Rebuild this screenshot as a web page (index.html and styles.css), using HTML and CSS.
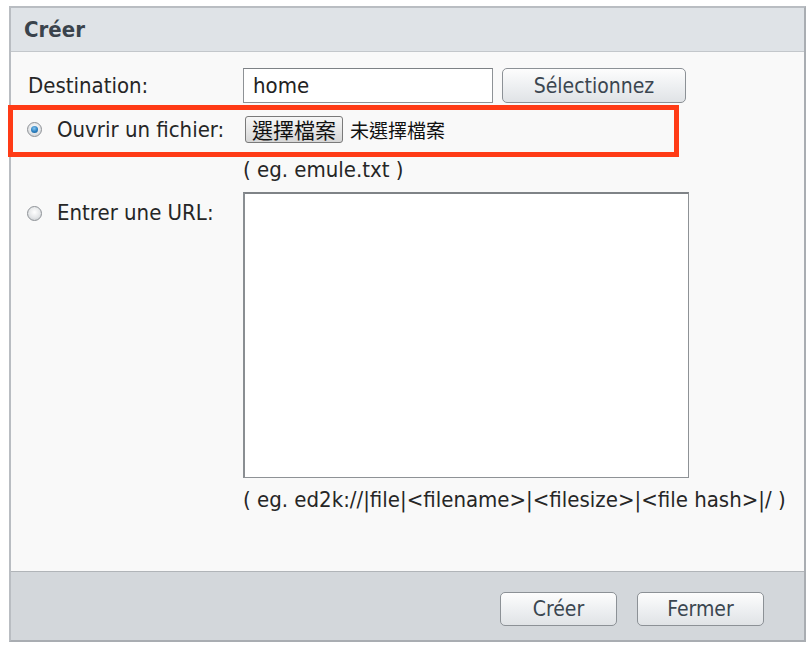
FILE: index.html
```html
<!DOCTYPE html>
<html lang="fr">
<head>
<meta charset="utf-8">
<title>Créer</title>
<link rel="stylesheet" href="styles.css">
</head>
<body>
<div class="dialog">
  <div class="header">Créer</div>
  <div class="content">
    <div class="row row-dest">
      <div class="label">Destination:</div>
      <div class="text-input">home</div>
      <button class="btn btn-select">Sélectionnez</button>
    </div>
    <div class="row row-file">
      <div class="label"><span class="radio checked"></span>Ouvrir un fichier:</div>
      <button class="file-btn">選擇檔案</button>
      <span class="file-none">未選擇檔案</span>
    </div>
    <div class="row row-hint1">
      <div class="label"></div>
      <div class="hint">( eg. emule.txt )</div>
    </div>
    <div class="row row-url">
      <div class="label label-top"><span class="radio"></span>Entrer une URL:</div>
      <div class="textarea"></div>
    </div>
    <div class="row row-hint2">
      <div class="label"></div>
      <div class="hint">( eg. ed2k://|file|&lt;filename&gt;|&lt;filesize&gt;|&lt;file hash&gt;|/ )</div>
    </div>
  </div>
  <div class="footer">
    <button class="btn btn-foot">Créer</button>
    <button class="btn btn-foot btn-close">Fermer</button>
  </div>
  <div class="highlight"></div>
</div>
</body>
</html>
```

FILE: styles.css
```css
html, body {
  margin: 0;
  padding: 0;
  background: #ffffff;
}

body {
  font-family: "DejaVu Sans Condensed", "DejaVu Sans", "Noto Sans CJK TC", sans-serif;
  font-size: 22px;
  color: #262626;
}

.dialog {
  position: relative;
  box-sizing: border-box;
  width: 797px;
  height: 636px;
  margin: 6px 0 0 9px;
  border: 2px solid #b9bdc2;
  border-right-color: #a9adb2;
  border-bottom-color: #a9adb2;
  display: flex;
  flex-direction: column;
  background: #f9f9f9;
}

.header {
  flex: none;
  height: 43px;
  line-height: 43px;
  padding-left: 13px;
  background: #dfe3e7;
  border-bottom: 1px solid #c3c7cb;
  font-weight: bold;
  color: #3a434c;
}

.content {
  flex: 1;
  padding: 16px 0 0 17px;
  background: #f9f9f9;
}

.row {
  display: flex;
  align-items: center;
}

.label {
  flex: none;
  width: 215px;
  line-height: 24px;
  display: flex;
  align-items: center;
  white-space: nowrap;
}

.label-top {
  align-self: flex-start;
  padding-top: 9px;
}

.radio {
  flex: none;
  box-sizing: border-box;
  width: 15px;
  height: 15px;
  margin-left: -1px;
  margin-right: 15px;
  border-radius: 50%;
  border: 1px solid #8e9297;
  background: radial-gradient(circle at 50% 40%, #ffffff 0%, #e4e6e8 55%, #c2c5c9 100%);
  position: relative;
}

.radio.checked::after {
  content: "";
  position: absolute;
  left: 3px;
  top: 3px;
  width: 7px;
  height: 7px;
  border-radius: 50%;
  background: radial-gradient(circle at 45% 35%, #86c6f0 0%, #2a7fc0 55%, #1b5a8c 100%);
}

.row-dest {
  height: 35px;
}

.text-input {
  box-sizing: border-box;
  width: 250px;
  height: 35px;
  line-height: 33px;
  padding-left: 9px;
  background: #ffffff;
  border: 1px solid #8e9296;
  border-top-color: #7d8185;
  color: #222;
}

.btn {
  font-family: inherit;
  font-size: 21px;
  color: #3b4650;
  border: 1px solid #8c9196;
  border-radius: 5px;
  background: linear-gradient(#fdfdfd, #eef0f2 50%, #e0e3e6);
  padding: 0;
  cursor: pointer;
}

.btn-select {
  width: 184px;
  height: 35px;
  margin-left: 9px;
}

.row-file {
  margin-top: 13px;
  height: 27px;
}

.file-btn {
  box-sizing: border-box;
  width: 98px;
  height: 27px;
  margin-left: 2px;
  padding: 0;
  font-family: "Noto Sans CJK TC", sans-serif;
  font-size: 21px;
  line-height: 25px;
  color: #111;
  border: 1px solid #7a7a7a;
  border-radius: 3px;
  background: linear-gradient(#f7f7f7, #e4e4e4 60%, #d6d6d6);
}

.file-none {
  margin-left: 7px;
  font-family: "Noto Sans CJK TC", sans-serif;
  font-size: 19px;
  color: #111;
}

.row-hint1 {
  margin-top: 15px;
}

.hint {
  line-height: 24px;
  color: #262626;
  white-space: nowrap;
}

.row-url {
  margin-top: 10px;
  align-items: flex-start;
}

.textarea {
  box-sizing: border-box;
  width: 446px;
  height: 286px;
  background: #ffffff;
  border: 1px solid #8e9296;
  border-top: 2px solid #7f8387;
  border-left: 2px solid #8a8e92;
}

.row-hint2 {
  margin-top: 10px;
}

.footer {
  flex: none;
  box-sizing: border-box;
  height: 69px;
  border-top: 1px solid #b0b4b8;
  background: #d3d7db;
  display: flex;
  justify-content: flex-end;
  align-items: flex-start;
  padding: 20px 40px 0 0;
}

.btn-foot {
  width: 117px;
  height: 34px;
}

.btn-close {
  width: 127px;
  margin-left: 20px;
}

.highlight {
  position: absolute;
  left: -3px;
  top: 97px;
  box-sizing: border-box;
  width: 671px;
  height: 52px;
  border: 5px solid #ff3b16;
  pointer-events: none;
}
```
